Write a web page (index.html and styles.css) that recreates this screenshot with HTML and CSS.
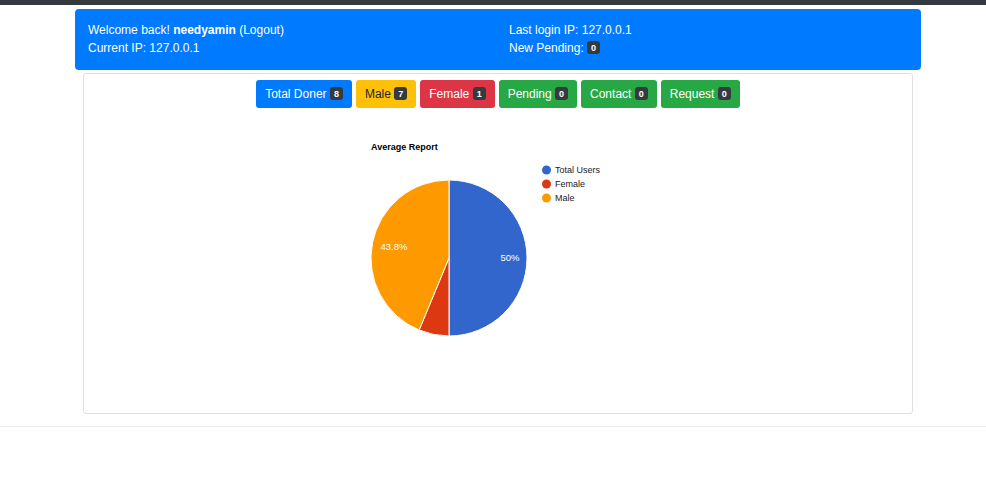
FILE: index.html
```html
<!DOCTYPE html>
<html lang="en">
<head>
<meta charset="utf-8">
<title>Dashboard</title>
<link rel="stylesheet" href="styles.css">
</head>
<body>
<div class="topbar"></div>
<div class="wrap">
  <div class="info">
    <div class="col">
      <div>Welcome back! <b>needyamin</b> (Logout)</div>
      <div>Current IP: 127.0.0.1</div>
    </div>
    <div class="col">
      <div>Last login IP: 127.0.0.1</div>
      <div>New Pending: <span class="badge">0</span></div>
    </div>
  </div>
  <div class="card">
    <div class="btns">
      <span class="btn blue">Total Doner <span class="badge">8</span></span>
      <span class="btn yellow">Male <span class="badge">7</span></span>
      <span class="btn red">Female <span class="badge">1</span></span>
      <span class="btn green">Pending <span class="badge">0</span></span>
      <span class="btn green">Contact <span class="badge">0</span></span>
      <span class="btn green">Request <span class="badge">0</span></span>
    </div>
    <svg class="chart" width="828" height="305" viewBox="0 0 828 305">
      <text class="ctitle" x="287" y="42">Average Report</text>
      <path d="M365,150 L365,72 A78,78 0 0 1 365,228 Z" fill="#3366cc" stroke="#fff" stroke-width="1"/>
      <path d="M365,150 L365,228 A78,78 0 0 1 335.15,222.06 Z" fill="#dc3912" stroke="#fff" stroke-width="1"/>
      <path d="M365,150 L335.15,222.06 A78,78 0 0 1 365,72 Z" fill="#ff9900" stroke="#fff" stroke-width="1"/>
      <text class="plabel" x="426" y="153" text-anchor="middle">50%</text>
      <text class="plabel" x="310" y="142" text-anchor="middle">43.8%</text>
      <circle cx="462.5" cy="62" r="4.5" fill="#3366cc"/>
      <circle cx="462.5" cy="76" r="4.5" fill="#dc3912"/>
      <circle cx="462.5" cy="90" r="4.5" fill="#ff9900"/>
      <text class="legend" x="471" y="65">Total Users</text>
      <text class="legend" x="471" y="79">Female</text>
      <text class="legend" x="471" y="93">Male</text>
    </svg>
  </div>
</div>
<div class="footer-line"></div>
</body>
</html>
```
FILE: styles.css
```css
html, body {
  margin: 0;
  padding: 0;
  background: #fff;
  font-family: "Liberation Sans", Arial, sans-serif;
  font-size: 12px;
  line-height: 18px;
  color: #212529;
}
.topbar {
  height: 5px;
  background: #343a40;
}
.wrap {
  width: 846px;
  margin: 4px 0 0 75px;
}
.info {
  background: #007bff;
  color: #fff;
  border-radius: 4px;
  padding: 12px 13px 13px 13px;
  display: grid;
  grid-template-columns: 421px 1fr;
}
.badge {
  display: inline-block;
  background: #343a40;
  color: #fff;
  font-size: 9px;
  font-weight: bold;
  line-height: 10px;
  padding: 2px 4px 1px;
  border-radius: 3px;
  vertical-align: 1px;
}
.card {
  margin: 3px 8px 0;
  border: 1px solid #dfdfdf;
  border-radius: 3px;
  display: flex;
  flex-direction: column;
}
.btns {
  display: flex;
  justify-content: center;
  gap: 4px;
  margin-top: 6px;
}
.btn {
  display: inline-block;
  padding: 5px 9px;
  border-radius: 3px;
  color: #fff;
  font-size: 12px;
  line-height: 18px;
  white-space: nowrap;
}
.blue { background: #007bff; }
.yellow { background: #ffc107; color: #212529; }
.red { background: #dc3545; }
.green { background: #28a745; }
.chart {
  display: block;
}
.ctitle {
  font-family: "Liberation Sans", Arial, sans-serif;
  font-size: 9px;
  font-weight: bold;
  fill: #000;
}
.plabel {
  font-family: "Liberation Sans", Arial, sans-serif;
  font-size: 9.5px;
  fill: #fff;
}
.legend {
  font-family: "Liberation Sans", Arial, sans-serif;
  font-size: 9px;
  fill: #222;
}
.footer-line {
  margin-top: 12px;
  border-top: 1px solid #ececec;
}
```
